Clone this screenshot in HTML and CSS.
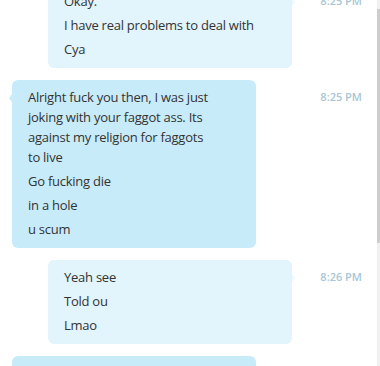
FILE: index.html
```html
<!DOCTYPE html>
<html lang="en">
<head>
	<meta http-equiv="Content-Type" content="text/html;charset=UTF-8">
	<link rel="stylesheet" href="styles.css">
</head>
<body>

<div class="chat">
	<div class="chat__log">
		<div class="msg msg_out">
			<div class="msg__bubble">
				<p class="msg__line">Okay.</p>
				<p class="msg__line">I have real problems to deal with</p>
				<p class="msg__line">Cya</p>
			</div>
			<span class="msg__time">8:25 PM</span>
		</div>

		<div class="msg msg_in">
			<div class="msg__bubble">
				<p class="msg__line">Alright fuck you then, I was just joking with your faggot ass. Its against my religion for faggots to live</p>
				<p class="msg__line">Go fucking die</p>
				<p class="msg__line">in a hole</p>
				<p class="msg__line">u scum</p>
			</div>
			<span class="msg__time">8:25 PM</span>
		</div>

		<div class="msg msg_out">
			<div class="msg__bubble">
				<p class="msg__line">Yeah see</p>
				<p class="msg__line">Told ou</p>
				<p class="msg__line">Lmao</p>
			</div>
			<span class="msg__time">8:26 PM</span>
		</div>

		<div class="msg msg_in">
			<div class="msg__bubble">
				<p class="msg__line">&nbsp;</p>
			</div>
			<span class="msg__time"></span>
		</div>
	</div>
	<div class="chat__scroll">
		<div class="chat__thumb"></div>
	</div>
</div>

</body>
</html>
```
FILE: styles.css
```css
body {
	margin: 0;
	padding: 0;
	background: #fff;
	font-family: "Open Sans", "Noto Sans", sans-serif;
	color: #333;
}

.chat {
	display: flex;
	width: 380px;
	height: 366px;
	overflow: hidden;
}

.chat__log {
	flex: 1;
	display: flex;
	flex-direction: column;
	gap: 12px;
	margin-top: -16px;
}

.chat__scroll {
	width: 3px;
	background: #f0f0f0;
	padding-top: 9px;
}

.chat__thumb {
	height: 234px;
	background: #cdcdcd;
}

.msg {
	display: flex;
	align-items: flex-start;
}

.msg_out {
	padding-left: 48px;
}

.msg_in {
	padding-left: 12px;
}

.msg__bubble {
	position: relative;
	box-sizing: border-box;
	width: 244px;
	padding: 7px 34px 9px 16px;
	border-radius: 6px;
	display: flex;
	flex-direction: column;
	gap: 4px;
}

.msg_out .msg__bubble {
	background: #e2f4fc;
}

.msg_in .msg__bubble {
	padding-right: 44px;
	background: #c8ebfa;
}

/* little tails */
.msg_in .msg__bubble::before {
	content: "";
	position: absolute;
	left: -3px;
	top: 14px;
	border-top: 4px solid transparent;
	border-bottom: 4px solid transparent;
	border-right: 3px solid #c8ebfa;
}

.msg_out .msg__bubble::after {
	content: "";
	position: absolute;
	right: -3px;
	top: 14px;
	border-top: 4px solid transparent;
	border-bottom: 4px solid transparent;
	border-left: 3px solid #eef8fd;
}

.msg__line {
	margin: 0;
	font-size: 13px;
	line-height: 20px;
	letter-spacing: -0.25px;
}

.msg__time {
	margin-left: auto;
	margin-right: 15px;
	padding-top: 10px;
	font-size: 11px;
	font-weight: 600;
	color: #a8c6d8;
	line-height: 14px;
}
```
